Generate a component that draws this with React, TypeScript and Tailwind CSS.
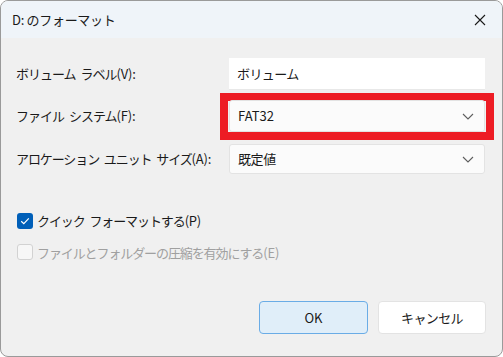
import React from "react";

const font = { fontFamily: '"Noto Sans CJK JP", "Noto Sans", sans-serif' };

function Chevron() {
  return (
    <svg width="12" height="7" viewBox="0 0 12 7" className="shrink-0">
      <path d="M1 1 L6 6 L11 1" fill="none" stroke="#5f5f5f" strokeWidth="1.1" />
    </svg>
  );
}

export default function App() {
  return (
    <div className="w-[503px] h-[357px] bg-white" style={font}>
      <div className="w-[503px] h-[357px] border border-[#9a9a9a] rounded-[8px] overflow-hidden flex flex-col bg-[#f0f0f0]">
        <div className="h-[37px] bg-[#eff4f9] flex items-center justify-between pl-[11px] pr-[16px] shrink-0">
          <span className="text-[13px] text-[#1a1a1a] tracking-[-0.3px]">D: のフォーマット</span>
          <svg width="12" height="12" viewBox="0 0 12 12">
            <path d="M1 1 L11 11 M11 1 L1 11" stroke="#1a1a1a" strokeWidth="1.1" />
          </svg>
        </div>
        <div className="flex-1 flex flex-col pl-[15px] pr-[16px] pt-[20px]">
          <div className="grid grid-cols-[213px_256px] gap-y-[10px] items-center text-[13px] text-[#1a1a1a] [word-spacing:3px]">
            <span className="tracking-[-1px]">ボリューム ラベル<span className="tracking-[-0.2px]">(V):</span></span>
            <div className="h-[32px] bg-white border-b border-[#e8e8e8] flex items-center px-[8px] tracking-[-0.6px]">
              ボリューム
            </div>
            <span className="tracking-[-1px]">ファイル システム<span className="tracking-[-0.2px]">(F):</span></span>
            <div className="relative">
              <div className="absolute -left-[9px] -right-[9px] -top-[7px] -bottom-[8px] border-[8px] border-[#ed1c24]" />
              <div className="relative h-[32px] bg-[#fbfbfb] border border-[#e3e3e3] rounded-[3px] flex items-center justify-between pl-[8px] pr-[10px]">
                <span className="tracking-[0px]">FAT32</span>
                <Chevron />
              </div>
            </div>
            <span className="mt-[2px] tracking-[-1.1px]">アロケーション ユニット サイズ<span className="tracking-[-0.2px]">(A):</span></span>
            <div className="mt-[2px] h-[30px] bg-[#fbfbfb] border border-[#e3e3e3] rounded-[3px] flex items-center justify-between pl-[8px] pr-[10px]">
              <span className="tracking-[-0.4px]">既定値</span>
              <Chevron />
            </div>
          </div>

          <div className="mt-[37px] flex flex-col gap-[12px] pl-[1px] text-[13px] tracking-[-1.1px] [word-spacing:3px]">
            <label className="flex items-center gap-[4px] text-[#1a1a1a]">
              <span className="w-[16px] h-[16px] rounded-[3px] bg-[#005fb8] flex items-center justify-center">
                <svg width="10" height="8" viewBox="0 0 10 8">
                  <path d="M1.2 4.2 L3.8 6.6 L8.8 1.4" fill="none" stroke="white" strokeWidth="1.2" />
                </svg>
              </span>
              <span>クイック フォーマットする<span className="tracking-[-0.2px]">(P)</span></span>
            </label>
            <label className="flex items-center gap-[4px] text-[#a0a0a0]">
              <span className="w-[16px] h-[16px] rounded-[3px] bg-[#f7f7f7] border border-[#d2d2d2]" />
              <span>ファイルとフォルダーの圧縮を有効にする<span className="tracking-[-0.2px]">(E)</span></span>
            </label>
          </div>

          <div className="mt-auto mb-[22px] flex justify-end gap-[10px]">
            <button className="w-[109px] h-[33px] rounded-[4px] bg-[#e0eef9] border border-[#6aace6] text-[13px] text-[#1a1a1a]">
              OK
            </button>
            <button className="w-[108px] h-[33px] rounded-[4px] bg-white border border-[#e3e3e3] text-[13px] text-[#1a1a1a] tracking-[-0.6px]">
              キャンセル
            </button>
          </div>
        </div>
      </div>
    </div>
  );
}
